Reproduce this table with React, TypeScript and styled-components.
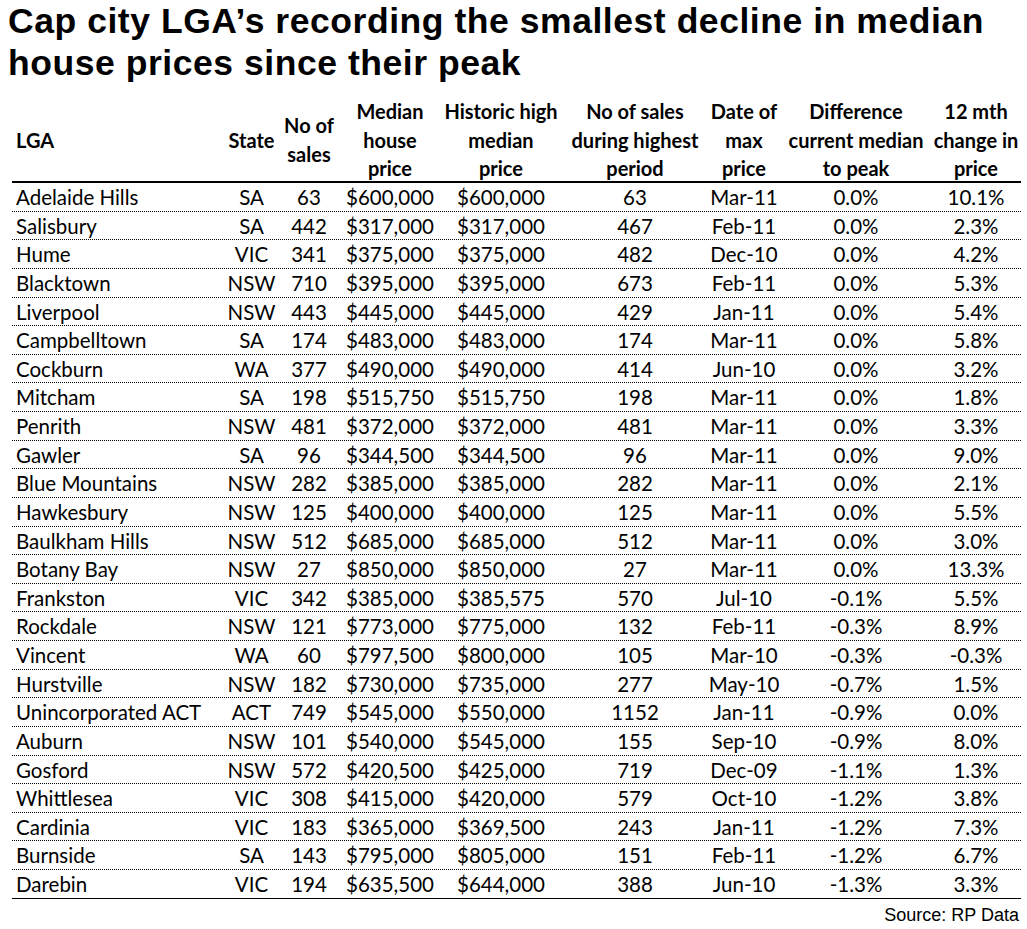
import React from "react";
import styled, { createGlobalStyle } from "styled-components";

const Global = createGlobalStyle`
  html, body { margin: 0; padding: 0; background: #fff; }
  body { font-family: "Lato", "Liberation Sans", sans-serif; color: #000; }
`;

const Page = styled.div`
  width: 1027px;
  height: 929px;
  box-sizing: border-box;
  display: flex;
  flex-direction: column;
`;

const Title = styled.h1`
  margin: 0;
  padding-left: 8px;
  font-family: "Liberation Sans", Arial, sans-serif;
  font-weight: 700;
  font-size: 35.5px;
  line-height: 42px;
  letter-spacing: 0.55px;
  white-space: nowrap;
`;

const Table = styled.div`
  margin: 13px 0 0 12px;
  width: 1009px;
  display: flex;
  flex-direction: column;
`;

const cols = "214px 51px 64px 98px 124px 144px 74px 150px 90px";

const HeadRow = styled.div`
  display: grid;
  grid-template-columns: ${cols};
  height: 84px;
  border-bottom: 2px solid #000;
`;

const HeadCell = styled.div<{ $left?: boolean }>`
  display: flex;
  align-items: center;
  justify-content: ${(p) => (p.$left ? "flex-start" : "center")};
  text-align: ${(p) => (p.$left ? "left" : "center")};
  padding-left: ${(p) => (p.$left ? "4px" : "0")};
  font-weight: 700;
  font-size: 20px;
  line-height: 28.5px;
  white-space: pre-line;
`;

const Row = styled.div<{ $last?: boolean }>`
  display: grid;
  grid-template-columns: ${cols};
  height: 28.64px;
  box-sizing: border-box;
  border-bottom: 1px ${(p) => (p.$last ? "solid" : "dotted")} #000;
`;

const Cell = styled.div<{ $left?: boolean }>`
  font-size: 20.5px;
  line-height: 27.64px;
  padding-top: 1px;
  text-align: ${(p) => (p.$left ? "left" : "center")};
  padding-left: ${(p) => (p.$left ? "4px" : "0")};
  white-space: nowrap;
`;

const Source = styled.div`
  width: 1019px;
  text-align: right;
  font-family: "Liberation Sans", Arial, sans-serif;
  font-size: 18px;
  line-height: 20px;
  margin-top: 6px;
`;

const headers = [
  "LGA",
  "State",
  "No of\nsales",
  "Median\nhouse\nprice",
  "Historic high\nmedian\nprice",
  "No of sales\nduring highest\nperiod",
  "Date of\nmax\nprice",
  "Difference\ncurrent median\nto peak",
  "12 mth\nchange in\nprice",
];

const rows: string[][] = [
  ["Adelaide Hills", "SA", "63", "$600,000", "$600,000", "63", "Mar-11", "0.0%", "10.1%"],
  ["Salisbury", "SA", "442", "$317,000", "$317,000", "467", "Feb-11", "0.0%", "2.3%"],
  ["Hume", "VIC", "341", "$375,000", "$375,000", "482", "Dec-10", "0.0%", "4.2%"],
  ["Blacktown", "NSW", "710", "$395,000", "$395,000", "673", "Feb-11", "0.0%", "5.3%"],
  ["Liverpool", "NSW", "443", "$445,000", "$445,000", "429", "Jan-11", "0.0%", "5.4%"],
  ["Campbelltown", "SA", "174", "$483,000", "$483,000", "174", "Mar-11", "0.0%", "5.8%"],
  ["Cockburn", "WA", "377", "$490,000", "$490,000", "414", "Jun-10", "0.0%", "3.2%"],
  ["Mitcham", "SA", "198", "$515,750", "$515,750", "198", "Mar-11", "0.0%", "1.8%"],
  ["Penrith", "NSW", "481", "$372,000", "$372,000", "481", "Mar-11", "0.0%", "3.3%"],
  ["Gawler", "SA", "96", "$344,500", "$344,500", "96", "Mar-11", "0.0%", "9.0%"],
  ["Blue Mountains", "NSW", "282", "$385,000", "$385,000", "282", "Mar-11", "0.0%", "2.1%"],
  ["Hawkesbury", "NSW", "125", "$400,000", "$400,000", "125", "Mar-11", "0.0%", "5.5%"],
  ["Baulkham Hills", "NSW", "512", "$685,000", "$685,000", "512", "Mar-11", "0.0%", "3.0%"],
  ["Botany Bay", "NSW", "27", "$850,000", "$850,000", "27", "Mar-11", "0.0%", "13.3%"],
  ["Frankston", "VIC", "342", "$385,000", "$385,575", "570", "Jul-10", "-0.1%", "5.5%"],
  ["Rockdale", "NSW", "121", "$773,000", "$775,000", "132", "Feb-11", "-0.3%", "8.9%"],
  ["Vincent", "WA", "60", "$797,500", "$800,000", "105", "Mar-10", "-0.3%", "-0.3%"],
  ["Hurstville", "NSW", "182", "$730,000", "$735,000", "277", "May-10", "-0.7%", "1.5%"],
  ["Unincorporated ACT", "ACT", "749", "$545,000", "$550,000", "1152", "Jan-11", "-0.9%", "0.0%"],
  ["Auburn", "NSW", "101", "$540,000", "$545,000", "155", "Sep-10", "-0.9%", "8.0%"],
  ["Gosford", "NSW", "572", "$420,500", "$425,000", "719", "Dec-09", "-1.1%", "1.3%"],
  ["Whittlesea", "VIC", "308", "$415,000", "$420,000", "579", "Oct-10", "-1.2%", "3.8%"],
  ["Cardinia", "VIC", "183", "$365,000", "$369,500", "243", "Jan-11", "-1.2%", "7.3%"],
  ["Burnside", "SA", "143", "$795,000", "$805,000", "151", "Feb-11", "-1.2%", "6.7%"],
  ["Darebin", "VIC", "194", "$635,500", "$644,000", "388", "Jun-10", "-1.3%", "3.3%"],
];

export default function App() {
  return (
    <>
      <Global />
      <Page>
        <Title>
          Cap city LGA’s recording the smallest decline in median
          <br />
          house prices since their peak
        </Title>
        <Table>
          <HeadRow>
            {headers.map((h, i) => (
              <HeadCell key={i} $left={i === 0}>
                {h}
              </HeadCell>
            ))}
          </HeadRow>
          {rows.map((r, ri) => (
            <Row key={ri} $last={ri === rows.length - 1}>
              {r.map((c, ci) => (
                <Cell key={ci} $left={ci === 0}>
                  {c}
                </Cell>
              ))}
            </Row>
          ))}
        </Table>
        <Source>Source: RP Data</Source>
      </Page>
    </>
  );
}
